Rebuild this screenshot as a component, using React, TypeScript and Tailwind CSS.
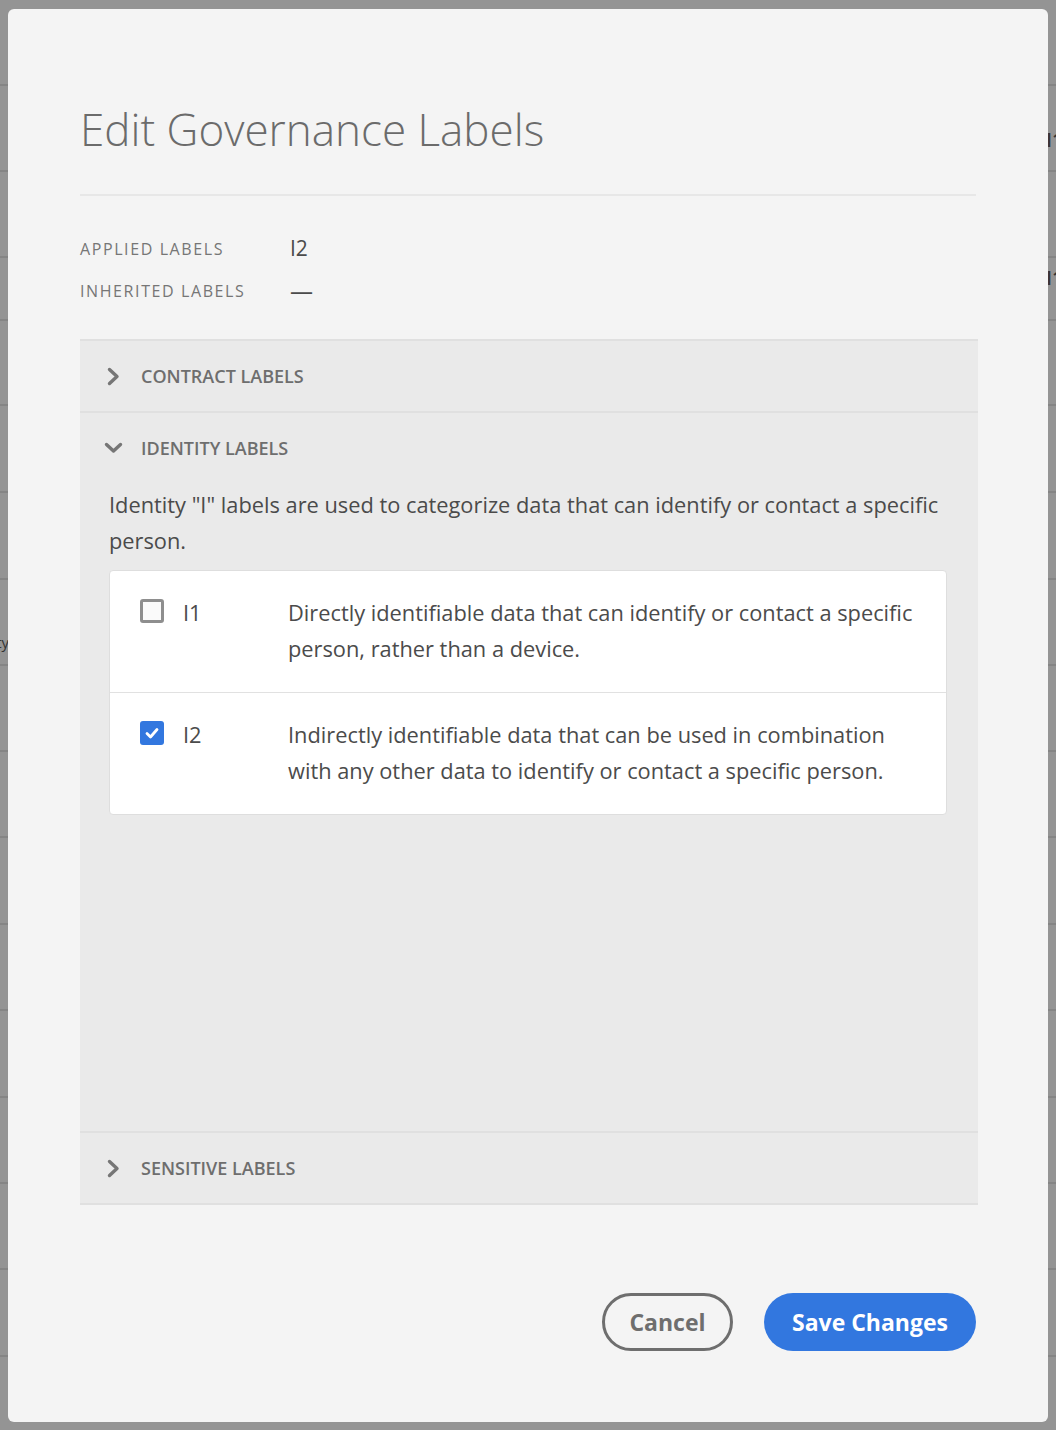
import React from 'react';

// Page rows behind the dialog (only their edges show around the modal)
const pageRows: { h: string; pad?: string; left?: string; right?: string }[] = [
  { h: 'h-[86px]' },
  { h: 'h-[86px]', pad: 'pt-[42px]', right: 'I1' },
  { h: 'h-[86px]' },
  { h: 'h-[63px]', pad: 'pt-[8px]', right: 'I1' },
  { h: 'h-[85px]' },
  { h: 'h-[87px]' },
  { h: 'h-[87px]' },
  { h: 'h-[86px]', pad: 'pt-[52px]', left: 'Identity' },
  { h: 'h-[86px]' },
  { h: 'h-[86px]' },
  { h: 'h-[87px]' },
  { h: 'h-[86px]' },
  { h: 'h-[87px]' },
  { h: 'h-[86px]' },
  { h: 'h-[86px]' },
  { h: 'h-[87px]' },
];

const identityLabels = [
  {
    code: 'I1',
    checked: false,
    description: 'Directly identifiable data that can identify or contact a specific person, rather than a device.',
  },
  {
    code: 'I2',
    checked: true,
    description: 'Indirectly identifiable data that can be used in combination with any other data to identify or contact a specific person.',
  },
];

function ChevronRight() {
  return (
    <svg width="13" height="19" viewBox="0 0 13 19" fill="none">
      <path d="M2.5 2.5L10 9.5L2.5 16.5" stroke="#767676" strokeWidth="3.4" strokeLinecap="round" strokeLinejoin="round" />
    </svg>
  );
}

function ChevronDown() {
  return (
    <svg width="19" height="12" viewBox="0 0 19 12" fill="none">
      <path d="M2.5 2.5L9.5 9L16.5 2.5" stroke="#767676" strokeWidth="3.4" strokeLinecap="round" strokeLinejoin="round" />
    </svg>
  );
}

function Checkbox({ checked }: { checked: boolean }) {
  if (checked) {
    return (
      <div className="flex h-[24px] w-[24px] items-center justify-center rounded-[3px] bg-[#3277df]">
        <svg width="16" height="16" viewBox="0 0 16 16" fill="none">
          <path d="M3 8.5L6.5 12L13 4.5" stroke="white" strokeWidth="2.8" strokeLinecap="round" strokeLinejoin="round" />
        </svg>
      </div>
    );
  }
  return <div className="h-[24px] w-[24px] rounded-[3px] border-[3px] border-[#8e8e8e] bg-[#fafafa]" />;
}

function SectionHeader({ title, open }: { title: string; open?: boolean }) {
  return (
    <div className="flex h-[70px] items-center pl-[22px]">
      <div className="flex w-[22px] justify-center">{open ? <ChevronDown /> : <ChevronRight />}</div>
      <span className="ml-[17px] text-[18px] font-semibold text-[#6e6e6e]">{title}</span>
    </div>
  );
}

export default function App() {
  return (
    <div className="relative h-[1430px] w-full overflow-hidden bg-white font-['Open_Sans','Noto_Sans',Arial,sans-serif]">
      {/* Underlying page */}
      <div className="flex flex-col">
        {pageRows.map((row, i) => (
          <div key={i} className={`${row.h} ${row.pad ?? ''} flex items-start justify-between border-b-2 border-[#e5e5e5]`}>
            <div className="flex w-[9px] justify-end whitespace-nowrap text-[15px] leading-[20px] text-[#5a5a5a]">{row.left}</div>
            <div className="w-[10px] whitespace-nowrap text-[20px] font-semibold leading-[24px] text-[#5a5a5a]">{row.right}</div>
          </div>
        ))}
      </div>

      {/* Backdrop */}
      <div className="absolute inset-0 bg-black/[0.42]" />

      {/* Dialog */}
      <div className="absolute left-[8px] top-[9px] flex h-[1413px] w-[1040px] flex-col rounded-[6px] bg-[#f4f4f4] px-[72px] pt-[91px]">
        <h1 className="text-[44px] font-light leading-[58px] text-[#6b6b6b]">Edit Governance Labels</h1>
        <div className="mt-[36px] h-[2px] bg-[#e7e7e7]" />

        <div className="mt-[32px]">
          <div className="flex h-[42px] items-center">
            <span className="w-[210px] text-[16px] tracking-[0.1em] text-[#767676]">APPLIED LABELS</span>
            <span className="text-[21px] text-[#4b4b4b]">I2</span>
          </div>
          <div className="flex h-[42px] items-center">
            <span className="w-[210px] text-[16px] tracking-[0.1em] text-[#767676]">INHERITED LABELS</span>
            <span className="text-[23px] text-[#4b4b4b]">—</span>
          </div>
        </div>

        {/* Accordion */}
        <div className="-mr-[2px] mt-[27px] border-t-2 border-[#e0e0e0] bg-[#eaeaea]">
          <div className="border-b-2 border-[#e0e0e0]">
            <SectionHeader title="CONTRACT LABELS" />
          </div>

          <div className="border-b-2 border-[#e0e0e0]">
            <SectionHeader title="IDENTITY LABELS" open />
            <div className="h-[648px] pl-[29px] pr-[31px] pt-[4px]">
              <p className="text-[21.8px] leading-[36px] text-[#4b4b4b]">
                Identity "I" labels are used to categorize data that can identify or contact a specific person.
              </p>
              <div className="mt-[11px] rounded-[4px] border border-[#dedede] bg-white">
                {identityLabels.map((label, i) => (
                  <div
                    key={label.code}
                    className={`flex items-start pb-[25px] pt-[24px] pl-[30px] pr-[20px] ${i > 0 ? 'border-t border-[#e1e1e1]' : ''}`}
                  >
                    <div className="mt-[4px]">
                      <Checkbox checked={label.checked} />
                    </div>
                    <span className="ml-[19px] w-[105px] text-[21.8px] leading-[36px] text-[#4b4b4b]">{label.code}</span>
                    <p className="flex-1 text-[21.8px] leading-[36px] text-[#4b4b4b]">{label.description}</p>
                  </div>
                ))}
              </div>
            </div>
          </div>

          <div className="border-b-2 border-[#e0e0e0]">
            <SectionHeader title="SENSITIVE LABELS" />
          </div>
        </div>

        {/* Footer buttons */}
        <div className="mt-[88px] flex justify-end gap-[31px]">
          <button className="h-[58px] w-[131px] rounded-full border-[3px] border-[#6e6e6e] text-[23px] font-bold text-[#6e6e6e]">
            Cancel
          </button>
          <button className="h-[58px] w-[212px] rounded-full bg-[#3277df] text-[23px] font-bold text-white">
            Save Changes
          </button>
        </div>
      </div>
    </div>
  );
}
